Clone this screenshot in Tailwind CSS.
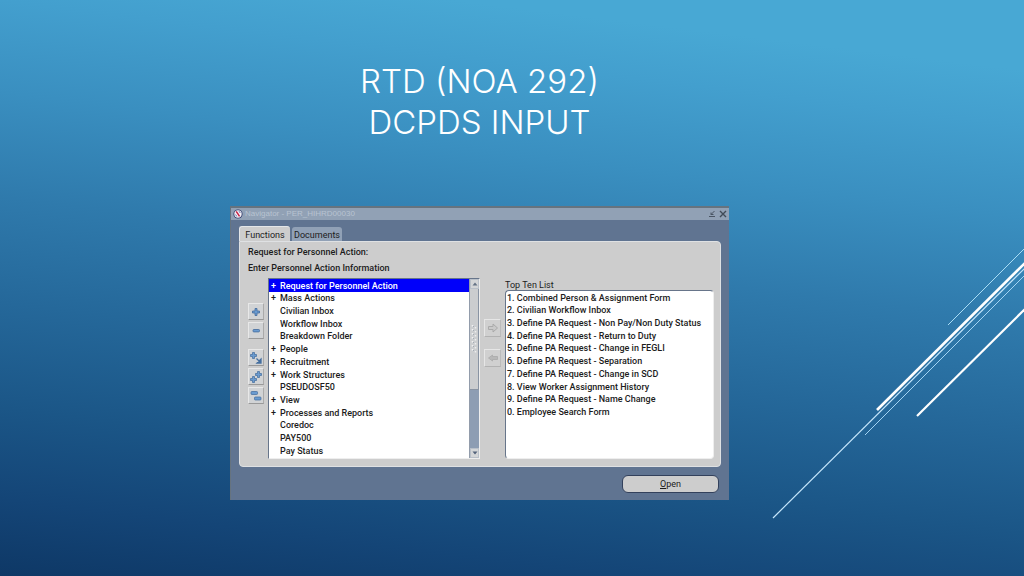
<!DOCTYPE html>
<html lang="en">
<head>
<meta charset="utf-8">
<meta name="viewport" content="width=device-width, initial-scale=1">
<title>RTD (NOA 292) DCPDS Input</title>
<script src="https://cdn.jsdelivr.net/npm/@tailwindcss/browser@4"></script>
</head>
<body class="relative min-h-screen overflow-x-hidden bg-[linear-gradient(187deg,#48a8d4_10%,#439fce_18%,#3a8fc0_31%,#2f7aac_46%,#25689a_61%,#1b5687_76%,#144577_89%,#0e3866_100%)] font-['Roboto','Liberation_Sans',sans-serif] text-[9px] text-[#1c1c1c]">

<svg class="absolute right-0 top-60 h-[290px] w-[264px]" viewBox="0 0 264 290" fill="none" stroke="#fff" aria-hidden="true">
  <path d="M188 85 265 8" stroke="#a9dcf5"/>
  <path d="M117 170 265 23" stroke-width="2.6"/>
  <path d="M13 278 265 28" stroke="#c5e6fb" stroke-width="1.200"/>
  <path d="M105 195 265 35" stroke="#a3d4f3"/>
  <path d="M157 176 265 69" stroke-width="2.2"/>
</svg>

<main class="relative flex flex-col items-center pr-[65px] pt-[61px]">
  <h1 class="text-center font-['Inter','Century_Gothic',sans-serif] text-[33px] leading-[41px] font-light text-white">RTD (NOA 292)<br>DCPDS INPUT</h1>

  <section class="mt-[63px] w-[499px] max-w-full border-t-2 border-l border-[#66737f] bg-[#607491]" aria-label="Navigator">
    <header class="flex h-3 items-center gap-1 bg-[#91a1b5] px-0.5">
      <svg class="size-2.5" viewBox="0 0 10 10" aria-hidden="true"><circle cx="5" cy="5" r="4.6" fill="#34406f"/><circle cx="5" cy="5" r="3.7" fill="#f4f1f6"/><path d="M3.200 2.400 6.600 7.400" stroke="#c51f42" stroke-width="1.500"/><path d="M6 2.200 7.300 4M2.600 5.500l1.200 2" stroke="#6877ad"/></svg>
      <h2 class="-ml-0.5 flex-1 font-['Liberation_Sans',sans-serif] text-[8px] text-[#b8c3d1]">Navigator - PER_HIHRD00030</h2>
      <button class="size-2" aria-label="Restore"><svg viewBox="0 0 8 8" fill="none" stroke="#4a5563"><path d="M1 6.500h6M6.500 1 3 4.500M3 2.500v2h2.500"/></svg></button>
      <button class="-ml-0.5 -mr-px size-2.5" aria-label="Close"><svg viewBox="0 0 10 10" fill="none" stroke="#414b58" stroke-width="1.400"><path d="m2 2 6 6M8 2 2 8"/></svg></button>
    </header>

    <div class="flex flex-col pt-1.5 pr-2 pb-[7px] pl-2">
      <div class="flex items-end gap-0.5" role="tablist">
        <button role="tab" aria-selected="true" class="h-[15px] w-[51px] rounded-t-[3px] border-t border-l border-[#e4e6e8] bg-[#cdcdcd] pt-0.5">Functions</button>
        <button role="tab" aria-selected="false" class="h-3.5 w-[50px] rounded-t-[3px] bg-[#91a1b6] pt-0.5">Documents</button>
      </div>

      <div class="rounded-sm rounded-tl-none border border-[#dfe1e3] bg-[#cdcdcd] pr-1.5 pl-2 pt-[3px] pb-[7px]" role="tabpanel">
        <p class="h-4 leading-[14px] font-medium">Request for Personnel Action:</p>
        <p class="h-4 leading-[14px] font-medium">Enter Personnel Action Information</p>

        <div class="mt-px flex">
          <div class="flex w-5 shrink-0 flex-col items-start gap-0.5 pt-[25px]">
            <button class="grid h-[17px] w-4 place-items-center border border-t-[#e8e8e8] border-r-[#aaa] border-b-[#999] border-l-[#e8e8e8] bg-[#d1d3d5]" aria-label="Expand"><svg class="size-2.5" viewBox="0 0 10 10"><path d="M4 1.500h2V4h2.500v2H6v2.500H4V6H1.500V4H4z" fill="#6a9bd0" stroke="#416a9c" stroke-width=".8"/></svg></button>
            <button class="grid h-[17px] w-4 place-items-center border border-t-[#e8e8e8] border-r-[#aaa] border-b-[#999] border-l-[#e8e8e8] bg-[#d1d3d5]" aria-label="Collapse"><svg class="size-2.5" viewBox="0 0 10 10"><rect x="2" y="3.500" width="6.500" height="2.400" rx=".8" fill="#6a9bd0" stroke="#416a9c" stroke-width=".8"/></svg></button>
            <button class="mt-2 grid h-[17px] w-4 place-items-center border border-t-[#e8e8e8] border-r-[#aaa] border-b-[#999] border-l-[#e8e8e8] bg-[#d1d3d5]" aria-label="Expand branch"><svg class="size-3.5" viewBox="0 0 14 14"><path d="M3.500 1.500h2v2h2v2h-2v2h-2v-2h-2v-2h2z" fill="#6a9bd0" stroke="#416a9c" stroke-width=".7"/><path d="m7.500 7.500 3 3M12 8v4H8z" fill="#456f9f" stroke="#456f9f" stroke-width="1.300"/></svg></button>
            <button class="grid h-[17px] w-4 place-items-center border border-t-[#e8e8e8] border-r-[#aaa] border-b-[#999] border-l-[#e8e8e8] bg-[#d1d3d5]" aria-label="Expand all"><svg class="size-3.5" viewBox="0 0 14 14"><path d="M8.500 1.500h2v2h2v2h-2v2h-2v-2h-2v-2h2zM3.500 6.500h2v2h2v2h-2v2h-2v-2h-2v-2h2z" fill="#6a9bd0" stroke="#416a9c" stroke-width=".7"/></svg></button>
            <button class="grid h-[17px] w-4 place-items-center border border-t-[#e8e8e8] border-r-[#aaa] border-b-[#999] border-l-[#e8e8e8] bg-[#d1d3d5]" aria-label="Collapse all"><svg class="size-3.5" viewBox="0 0 14 14"><rect x="2" y="2.500" width="6.500" height="3" rx=".8" fill="#6a9bd0" stroke="#416a9c" stroke-width=".7"/><rect x="5.500" y="8" width="6.500" height="3" rx=".8" fill="#6a9bd0" stroke="#416a9c" stroke-width=".7"/></svg></button>
          </div>

          <div class="flex h-[181px] w-[212px] shrink-0 border border-t-[#67758a] border-r-[#eee] border-b-[#eee] border-l-[#67758a] bg-white">
            <ul class="grid h-[178px] flex-1 auto-rows-fr font-medium" role="listbox" aria-label="Functions">
              <li role="option" aria-selected="true" class="flex items-center bg-[#0000fa] pt-0.5 text-white"><span class="w-[11px] pl-0.5">+</span>Request for Personnel Action</li>
              <li role="option" class="flex items-center pt-0.5"><span class="w-[11px] pl-0.5">+</span>Mass Actions</li>
              <li role="option" class="flex items-center pt-0.5 pl-[11px]">Civilian Inbox</li>
              <li role="option" class="flex items-center pt-0.5 pl-[11px]">Workflow Inbox</li>
              <li role="option" class="flex items-center pt-0.5 pl-[11px]">Breakdown Folder</li>
              <li role="option" class="flex items-center pt-0.5"><span class="w-[11px] pl-0.5">+</span>People</li>
              <li role="option" class="flex items-center pt-0.5"><span class="w-[11px] pl-0.5">+</span>Recruitment</li>
              <li role="option" class="flex items-center pt-0.5"><span class="w-[11px] pl-0.5">+</span>Work Structures</li>
              <li role="option" class="flex items-center pt-0.5 pl-[11px]">PSEUDOSF50</li>
              <li role="option" class="flex items-center pt-0.5"><span class="w-[11px] pl-0.5">+</span>View</li>
              <li role="option" class="flex items-center pt-0.5"><span class="w-[11px] pl-0.5">+</span>Processes and Reports</li>
              <li role="option" class="flex items-center pt-0.5 pl-[11px]">Coredoc</li>
              <li role="option" class="flex items-center pt-0.5 pl-[11px]">PAY500</li>
              <li role="option" class="flex items-center pt-0.5 pl-[11px]">Pay Status</li>
            </ul>
            <div class="flex w-2.5 flex-col border-l border-[#929cab] bg-[#8d9db3]">
              <button class="grid h-2.5 place-items-center border border-[#b9c0c9] bg-[#d4d6d8]" aria-label="Scroll up"><svg class="size-1.5" viewBox="0 0 6 6"><path d="M.5 4.500 3 1.500l2.500 3z" fill="#657385"/></svg></button>
              <div class="grid h-[101px] place-items-center border-r border-b border-[#8994a3] bg-[#cbcdcf]">
                <svg class="h-7 w-2" viewBox="0 0 8 28"><path d="M2.500 0v28" stroke="#f2f2f2" stroke-width="1.500" stroke-dasharray="1.500 2.500"/><path d="M5.500 2v26" stroke="#eee" stroke-width="1.500" stroke-dasharray="1.500 2.500"/><path d="M3.500 1v27" stroke="#a3abb5" stroke-dasharray="1 3"/></svg>
              </div>
              <div class="flex-1"></div>
              <button class="grid h-2.5 place-items-center border border-[#b9c0c9] bg-[#d4d6d8]" aria-label="Scroll down"><svg class="size-1.5" viewBox="0 0 6 6"><path d="M.5 1.500h5L3 4.500z" fill="#52627a"/></svg></button>
            </div>
          </div>

          <div class="flex w-[25px] shrink-0 flex-col items-center gap-3 pt-[41px]">
            <button class="grid h-[18px] w-[17px] place-items-center border border-t-[#e6e6e6] border-r-[#bbb] border-b-[#b2b2b2] border-l-[#e6e6e6] bg-[#d0d0d0]" aria-label="Add to top ten list"><svg class="size-3" viewBox="0 0 12 12"><path d="M1.500 4.500H6V2l4.500 4L6 10V7.500H1.500z" fill="#c9c9c9" stroke="#aaa"/></svg></button>
            <button class="grid h-[18px] w-[17px] place-items-center border border-t-[#e6e6e6] border-r-[#bbb] border-b-[#b2b2b2] border-l-[#e6e6e6] bg-[#d0d0d0]" aria-label="Remove from top ten list"><svg class="size-3" viewBox="0 0 12 12"><path d="M10.500 4.500H5.500V3L1.500 6l4 3V7.500h5z" fill="#b8b8b8" stroke="#aaa" stroke-width=".8"/></svg></button>
          </div>

          <div class="flex min-w-0 flex-1 flex-col">
            <h3 class="h-3 leading-[14px]" id="top-ten">Top Ten List</h3>
            <div class="flex-1 rounded-sm border border-t-[#67758a] border-r-[#eee] border-b-[#eee] border-l-[#67758a] bg-white">
              <ol class="grid h-[127px] auto-rows-fr pl-px font-medium whitespace-nowrap" aria-labelledby="top-ten">
                <li class="flex items-center pt-0.5">1. Combined Person &amp; Assignment Form</li>
                <li class="flex items-center pt-0.5">2. Civilian Workflow Inbox</li>
                <li class="flex items-center pt-0.5">3. Define PA Request - Non Pay/Non Duty Status</li>
                <li class="flex items-center pt-0.5">4. Define PA Request - Return to Duty</li>
                <li class="flex items-center pt-0.5">5. Define PA Request - Change in FEGLI</li>
                <li class="flex items-center pt-0.5">6. Define PA Request - Separation</li>
                <li class="flex items-center pt-0.5">7. Define PA Request - Change in SCD</li>
                <li class="flex items-center pt-0.5">8. View Worker Assignment History</li>
                <li class="flex items-center pt-0.5">9. Define PA Request - Name Change</li>
                <li class="flex items-center pt-0.5">0. Employee Search Form</li>
              </ol>
            </div>
          </div>
        </div>
      </div>

      <button class="mt-2 mr-0.5 h-[18px] w-[97px] self-end rounded-md border border-[#33415c] bg-[#cdcdcd] pt-px"><u>O</u>pen</button>
    </div>
  </section>
</main>
</body>
</html>
